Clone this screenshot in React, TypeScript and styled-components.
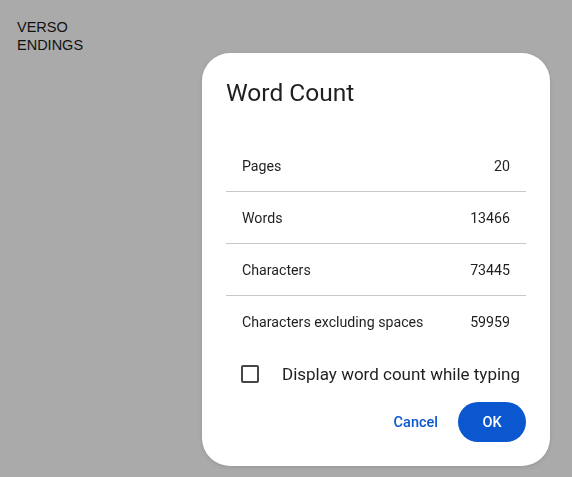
import React, { useState } from 'react';
import styled, { createGlobalStyle } from 'styled-components';

const GlobalStyle = createGlobalStyle`
  html, body {
    margin: 0;
    padding: 0;
    background: #aaaaaa;
  }
`;

interface Stat {
  label: string;
  value: string;
}

const stats: Stat[] = [
  { label: 'Pages', value: '20' },
  { label: 'Words', value: '13466' },
  { label: 'Characters', value: '73445' },
  { label: 'Characters excluding spaces', value: '59959' }
];

const Page = styled.div`
  width: 572px;
  height: 477px;
  background: #aaaaaa;
  padding: 18px 0 0 17px;
  box-sizing: border-box;
`;

const DocText = styled.div`
  font-family: 'Liberation Sans', Arial, sans-serif;
  font-size: 14.5px;
  line-height: 18px;
  color: #111;
`;

const Overlay = styled.div`
  position: fixed;
  inset: 0;
  padding: 53px 0 0 202px;
`;

const Dialog = styled.div`
  width: 348px;
  box-sizing: border-box;
  padding: 24px;
  background: #ffffff;
  border-radius: 28px;
  box-shadow: 0 1px 4px rgba(0, 0, 0, 0.12);
  font-family: Roboto, 'Noto Sans', sans-serif;
  color: #1f1f1f;
`;

const Title = styled.h2`
  margin: 0 0 31px 0;
  font-size: 24.5px;
  font-weight: 400;
  line-height: 32px;
  color: #1f1f1f;
`;

const StatRow = styled.div<{ $last?: boolean }>`
  display: flex;
  justify-content: space-between;
  align-items: center;
  height: 51px;
  padding: 0 16px;
  font-size: 14.2px;
  border-bottom: ${({ $last }) => ($last ? 'none' : '1px solid #c7c7c7')};
`;

const CheckRow = styled.label`
  display: flex;
  align-items: center;
  gap: 23px;
  margin-top: 10px;
  padding-left: 15px;
  height: 34px;
  font-size: 17px;
  cursor: pointer;
`;

const Box = styled.span<{ $checked: boolean }>`
  width: 18px;
  height: 18px;
  box-sizing: border-box;
  border: 2px solid #444746;
  border-radius: 2px;
  background: ${({ $checked }) => ($checked ? '#0b57d0' : 'transparent')};
  border-color: ${({ $checked }) => ($checked ? '#0b57d0' : '#444746')};
`;

const Actions = styled.div`
  display: flex;
  justify-content: flex-end;
  align-items: center;
  gap: 8px;
  margin-top: 11px;
`;

const TextButton = styled.button`
  border: none;
  background: none;
  padding: 0 12px;
  height: 40px;
  border-radius: 20px;
  font-family: Roboto, sans-serif;
  font-size: 14.5px;
  font-weight: 500;
  color: #0b57d0;
  cursor: pointer;
`;

const FilledButton = styled.button`
  border: none;
  background: #0b57d0;
  width: 68px;
  height: 40px;
  border-radius: 20px;
  font-family: Roboto, sans-serif;
  font-size: 14.5px;
  font-weight: 500;
  color: #ffffff;
  cursor: pointer;
`;

export default function App(): React.ReactElement {
  const [showWhileTyping, setShowWhileTyping] = useState(false);

  return (
    <>
      <GlobalStyle />
      <Page>
        <DocText>
          VERSO
          <br />
          ENDINGS
        </DocText>
      </Page>
      <Overlay>
        <Dialog>
          <Title>Word Count</Title>
          {stats.map((s, i) => (
            <StatRow
              key={s.label}
              $last={i === stats.length - 1}
            >
              <span>{s.label}</span>
              <span>{s.value}</span>
            </StatRow>
          ))}
          <CheckRow onClick={() => setShowWhileTyping(!showWhileTyping)}>
            <Box $checked={showWhileTyping} />
            Display word count while typing
          </CheckRow>
          <Actions>
            <TextButton>Cancel</TextButton>
            <FilledButton>OK</FilledButton>
          </Actions>
        </Dialog>
      </Overlay>
    </>
  );
}
